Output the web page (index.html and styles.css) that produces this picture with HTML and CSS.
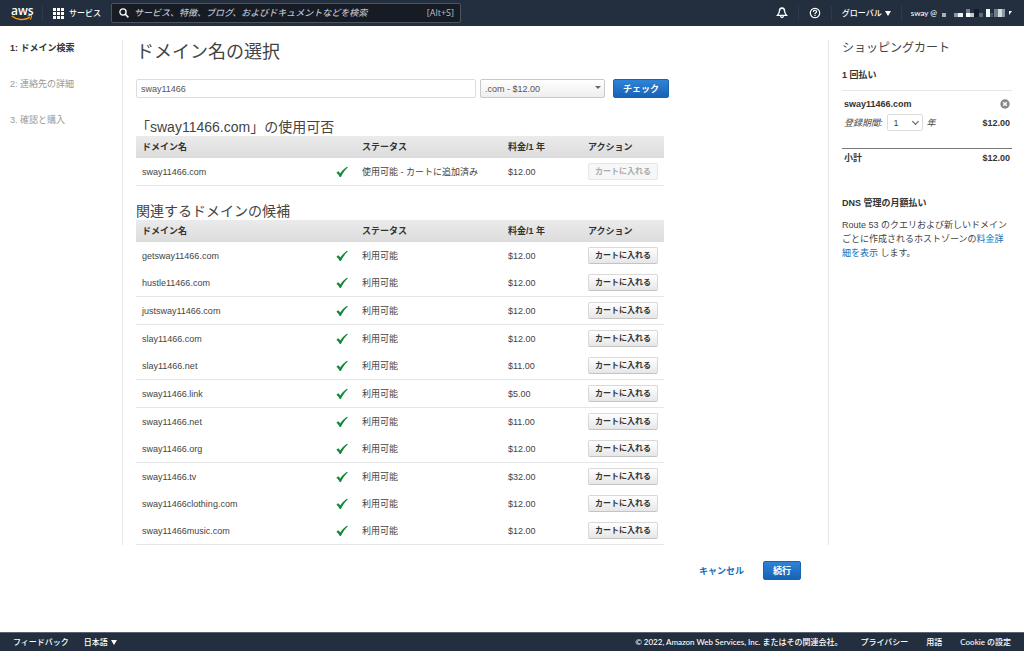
FILE: index.html
```html
<!DOCTYPE html>
<html lang="ja">
<head>
  <meta charset="UTF-8" />
  <meta name="viewport" content="width=device-width, initial-scale=1.0"/>
  <title>ドメイン名の選択</title>
  <link rel="stylesheet" href="styles.css">
</head>
<body>
  <svg class="sprite" aria-hidden="true">
    <symbol id="check" viewBox="0 0 12 12">
      <path d="M0.4 6.8 L2.2 5.2 C3 5.9 3.6 6.6 4.2 7.5 C6 5 8.2 2.6 11 0.8 L11.8 1.6 C8.8 4.2 6.8 7.2 4.9 11 L3.7 11 C2.9 9.4 2 8 0.4 6.8 Z"/>
    </symbol>
  </svg>

  <header class="topbar">
    <a class="logo" href="#">
      <span>aws</span>
      <svg width="22" height="6" viewBox="0 0 22 6" aria-hidden="true">
        <path d="M0.8 1 C6 5.4 13.5 5.6 18.8 2.4" fill="none" stroke="#f90" stroke-width="1.4"/>
        <path d="M16.6 1 C18.2 0.3 19.6 0.3 20.4 0.8 C20.6 2 20.1 3.5 19 4.5" fill="none" stroke="#f90" stroke-width="1.1"/>
      </svg>
    </a>
    <button class="services" type="button">
      <svg width="11" height="11" viewBox="0 0 11 11" aria-hidden="true">
        <path d="M0 0h3v3H0zM4 0h3v3H4zM8 0h3v3H8zM0 4h3v3H0zM4 4h3v3H4zM8 4h3v3H8zM0 8h3v3H0zM4 8h3v3H4zM8 8h3v3H8z" fill="#fff"/>
      </svg>
      サービス
    </button>
    <div class="search">
      <svg width="10" height="10" viewBox="0 0 10 10" aria-hidden="true">
        <circle cx="4" cy="4" r="3.1" fill="none" stroke="#fff" stroke-width="1.3"/>
        <path d="M6.3 6.3L9.4 9.4" stroke="#fff" stroke-width="1.5"/>
      </svg>
      <input type="search" aria-label="検索" placeholder="サービス、特徴、ブログ、およびドキュメントなどを検索">
      <span>[Alt+S]</span>
    </div>
    <div class="tools">
      <button type="button" aria-label="通知">
        <svg width="12" height="12" viewBox="0 0 12 12" fill="none" stroke="#fff" stroke-width="1.3" aria-hidden="true">
          <path d="M6 1 C4 1.2 3.4 2.6 3.4 4.2 C3.4 6 2.6 7 1.4 8.4 H10.6 C9.4 7 8.6 6 8.6 4.2 C8.6 2.6 8 1.2 6 1 Z"/>
          <path d="M4.6 9 C4.8 11 7.2 11 7.4 9"/>
        </svg>
      </button>
      <button type="button" aria-label="ヘルプ">
        <svg width="12" height="12" viewBox="0 0 12 12" fill="none" stroke="#fff" stroke-width="1.2" aria-hidden="true">
          <circle cx="6" cy="6" r="4.7"/>
          <path d="M4.4 4.9 C4.4 2.7 7.6 2.8 7.6 4.7 C7.6 5.9 6 5.7 6 7.1 M6 7.8 V9"/>
        </svg>
      </button>
      <button type="button">グローバル <i class="caret"></i></button>
      <button type="button" class="account">sway @
        <svg width="66" height="8" viewBox="0 0 66 8" aria-hidden="true">
          <path d="M2 4h4v4H2z" fill="#a9b0b8"/>
          <path d="M14 4h4v4h-4z" fill="#8e98a3"/>
          <path d="M18 4h5v4h-5z" fill="#f2f3f4"/>
          <path d="M26 0h4v4h-4z" fill="#71808e"/>
          <path d="M26 4h4v4h-4z" fill="#fff"/>
          <path d="M30 4h4v4h-4z" fill="#c4cacf"/>
          <path d="M34 0h5v8h-5z" fill="#101b2b"/>
          <path d="M39 4h4v4h-4z" fill="#5b6a79"/>
          <path d="M46 0h4v8h-4z" fill="#f4f5f6"/>
          <path d="M50 4h3v4h-3z" fill="#46566a"/>
          <path d="M54 0h4v8h-4z" fill="#707d8a"/>
          <path d="M58 0h4v8h-4z" fill="#d5d9dc"/>
          <path d="M62 0h3v8h-3z" fill="#8d97a1"/>
        </svg>
        <i class="caret small"></i>
      </button>
    </div>
  </header>

  <main class="layout">
    <nav class="steps">
      <ol>
        <li class="current">1: ドメイン検索</li>
        <li>2: 連絡先の詳細</li>
        <li>3. 確認と購入</li>
      </ol>
    </nav>

    <section class="content">
      <h1>ドメイン名の選択</h1>
      <form class="domain-form">
        <input type="text" aria-label="ドメイン名" value="sway11466">
        <span class="tld">
          <select aria-label="トップレベルドメイン">
            <option>.com - $12.00</option>
          </select>
        </span>
        <button class="primary" type="button">チェック</button>
      </form>

      <h2>「sway11466.com」の使用可否</h2>
      <table class="domains">
        <thead>
          <tr><th class="name">ドメイン名</th><th class="mark"></th><th class="status">ステータス</th><th class="price">料金/1 年</th><th>アクション</th></tr>
        </thead>
        <tbody>
          <tr class="line"><td>sway11466.com</td><td><svg class="check"><use href="#check"/></svg></td><td>使用可能 - カートに追加済み</td><td>$12.00</td><td><button type="button" disabled>カートに入れる</button></td></tr>
        </tbody>
      </table>

      <h2 class="related">関連するドメインの候補</h2>
      <table class="domains">
        <thead>
          <tr><th class="name">ドメイン名</th><th class="mark"></th><th class="status">ステータス</th><th class="price">料金/1 年</th><th>アクション</th></tr>
        </thead>
        <tbody>
          <tr><td>getsway11466.com</td><td><svg class="check"><use href="#check"/></svg></td><td>利用可能</td><td>$12.00</td><td><button type="button">カートに入れる</button></td></tr>
          <tr class="line"><td>hustle11466.com</td><td><svg class="check"><use href="#check"/></svg></td><td>利用可能</td><td>$12.00</td><td><button type="button">カートに入れる</button></td></tr>
          <tr class="line"><td>justsway11466.com</td><td><svg class="check"><use href="#check"/></svg></td><td>利用可能</td><td>$12.00</td><td><button type="button">カートに入れる</button></td></tr>
          <tr><td>slay11466.com</td><td><svg class="check"><use href="#check"/></svg></td><td>利用可能</td><td>$12.00</td><td><button type="button">カートに入れる</button></td></tr>
          <tr class="line"><td>slay11466.net</td><td><svg class="check"><use href="#check"/></svg></td><td>利用可能</td><td>$11.00</td><td><button type="button">カートに入れる</button></td></tr>
          <tr class="line"><td>sway11466.link</td><td><svg class="check"><use href="#check"/></svg></td><td>利用可能</td><td>$5.00</td><td><button type="button">カートに入れる</button></td></tr>
          <tr><td>sway11466.net</td><td><svg class="check"><use href="#check"/></svg></td><td>利用可能</td><td>$11.00</td><td><button type="button">カートに入れる</button></td></tr>
          <tr class="line"><td>sway11466.org</td><td><svg class="check"><use href="#check"/></svg></td><td>利用可能</td><td>$12.00</td><td><button type="button">カートに入れる</button></td></tr>
          <tr><td>sway11466.tv</td><td><svg class="check"><use href="#check"/></svg></td><td>利用可能</td><td>$32.00</td><td><button type="button">カートに入れる</button></td></tr>
          <tr><td>sway11466clothing.com</td><td><svg class="check"><use href="#check"/></svg></td><td>利用可能</td><td>$12.00</td><td><button type="button">カートに入れる</button></td></tr>
          <tr class="line"><td>sway11466music.com</td><td><svg class="check"><use href="#check"/></svg></td><td>利用可能</td><td>$12.00</td><td><button type="button">カートに入れる</button></td></tr>
        </tbody>
      </table>
    </section>

    <aside class="cart">
      <h2>ショッピングカート</h2>
      <h3>1 回払い</h3>
      <div class="cart-item">
        <div class="cart-row">
          <strong>sway11466.com</strong>
          <button class="remove" type="button" aria-label="削除">
            <svg width="10" height="10" viewBox="0 0 10 10" aria-hidden="true">
              <circle cx="5" cy="5" r="4.7" fill="#888"/>
              <path d="M3.2 3.2l3.6 3.6M6.8 3.2L3.2 6.8" stroke="#fff" stroke-width="1.4"/>
            </svg>
          </button>
        </div>
        <div class="cart-row">
          <div class="period">
            <label for="years">登録期間:</label>
            <span class="years"><select id="years"><option>1</option></select></span>
            <em>年</em>
          </div>
          <strong>$12.00</strong>
        </div>
      </div>
      <div class="cart-row subtotal">
        <strong>小計</strong>
        <strong>$12.00</strong>
      </div>
      <h3 class="dns">DNS 管理の月額払い</h3>
      <p>Route 53 のクエリおよび新しいドメインごとに作成されるホストゾーンの<a href="#">料金詳細を表示</a> します。</p>
    </aside>

    <div class="actions">
      <a href="#">キャンセル</a>
      <button class="primary" type="button">続行</button>
    </div>
  </main>

  <footer class="bottombar">
    <a href="#">フィードバック</a>
    <button type="button">日本語 <i class="caret"></i></button>
    <span class="copyright">© 2022, Amazon Web Services, Inc. またはその関連会社。</span>
    <a href="#">プライバシー</a>
    <a href="#">用語</a>
    <a href="#">Cookie の設定</a>
  </footer>
</body>
</html>
```
FILE: styles.css
```css
:root {
  --nav-bg: #232f3e;
  --text-color: #444;
  --link-color: #146eb4;
  --line-color: #e6e6e6;
}

* {
  margin: 0;
  padding: 0;
  box-sizing: border-box;
}

body {
  display: flex;
  flex-direction: column;
  min-height: 100vh;
  background: #fff;
  color: var(--text-color);
  font-family: "Liberation Sans", "Noto Sans CJK JP", sans-serif;
  font-size: 9px;
  line-height: 14px;
}

button, input, select {
  font: inherit;
  color: inherit;
}

button {
  cursor: pointer;
}

a {
  color: var(--link-color);
  text-decoration: none;
}

svg {
  display: block;
  flex: none;
}

.sprite {
  position: absolute;
  width: 0;
  height: 0;
}

.caret {
  display: inline-block;
  margin-left: 3px;
  border: 3px solid transparent;
  border-top: 5px solid currentColor;
  border-bottom: 0;
}

.caret.small {
  margin: 0;
  border-width: 4px 3px 0 0;
}

/* Top bar */
.topbar,
.bottombar {
  display: flex;
  align-items: center;
  background: var(--nav-bg);
  color: #fff;
  font-family: Lato, "Noto Sans CJK JP", sans-serif;
  font-size: 8px;
  font-weight: 500;
}

.topbar {
  height: 26px;
}

.topbar button,
.bottombar button {
  display: flex;
  align-items: center;
  border: 0;
  background: none;
}

.logo {
  width: 43px;
  padding-left: 11px;
  border-right: 1px solid #2f3b4a;
  color: #fff;
  font-family: "Open Sans", sans-serif;
  font-size: 12px;
  font-weight: 600;
  line-height: 9px;
}

.logo span {
  display: block;
}

.services {
  gap: 5px;
  padding: 0 10px;
}

.search {
  display: flex;
  align-items: center;
  gap: 5px;
  width: 350px;
  height: 20px;
  padding: 0 6px 0 7px;
  border: 1px solid #4b5560;
  border-radius: 2px;
  background: #161b24;
  color: #b6bec9;
  font-family: "Open Sans", "Noto Sans CJK JP", sans-serif;
  font-size: 9px;
}

.search input {
  flex: 1;
  min-width: 0;
  border: 0;
  outline: 0;
  background: none;
}

.search input::placeholder {
  color: #b6bec9;
  font-style: italic;
  opacity: 1;
}

.tools {
  display: flex;
  margin-left: auto;
  padding-right: 12px;
}

.tools button {
  padding: 0 10px;
  border-left: 1px solid #2f3b4a;
}

.tools button:first-child {
  border-left: 0;
}

.tools .account {
  gap: 3px;
  padding: 0 0 0 9px;
}

/* Page columns */
.layout {
  flex: 1;
  display: grid;
  grid-template-columns: 122px 1fr 196px;
  grid-template-rows: auto 1fr;
  padding-top: 14px;
}

.steps ol {
  padding: 1px 0 0 10px;
  list-style: none;
  color: #999;
}

.steps li {
  height: 36px;
}

.steps .current {
  color: #333;
  font-weight: bold;
}

.content {
  padding-left: 13px;
  border-left: 1px solid var(--line-color);
}

h1 {
  font-size: 18px;
  font-weight: normal;
  line-height: 24px;
}

h2 {
  font-size: 14px;
  font-weight: normal;
  line-height: 18px;
}

.related {
  margin-top: 16px;
}

/* Search form */
.domain-form {
  display: flex;
  margin: 15px 0 20px;
}

.domain-form input,
.domain-form select {
  height: 19px;
  border: 1px solid #ddd;
  border-radius: 2px;
  color: #555;
}

.domain-form input {
  width: 340px;
  padding: 0 4px;
}

.tld,
.years {
  position: relative;
}

.tld {
  width: 125px;
  margin: 0 8px 0 4px;
}

.tld select {
  width: 100%;
  padding: 0 4px;
  appearance: none;
  border-color: #c8c8c8;
  background: linear-gradient(#fff, #eee);
}

.tld::after {
  content: "";
  position: absolute;
  top: 7px;
  right: 4px;
  border: 3px solid transparent;
  border-top-color: #666;
  border-bottom: 0;
  pointer-events: none;
}

.primary {
  height: 19px;
  padding: 0 9px;
  border: 1px solid #1b62ad;
  border-radius: 2px;
  background: linear-gradient(#2f83d6, #1763b6);
  color: #fff;
  font-weight: bold;
}

/* Domain tables */
.domains {
  width: 100%;
  max-width: 528px;
  border-spacing: 0;
  table-layout: fixed;
}

.domains th {
  height: 22px;
  padding-left: 6px;
  background: linear-gradient(#ebebeb, #dcdcdc);
  color: #333;
  text-align: left;
}

.domains td {
  height: 27px;
  padding-left: 6px;
}

.domains .line td {
  height: 28px;
  border-bottom: 1px solid var(--line-color);
}

.domains .name {
  width: 194px;
}

.domains .mark {
  width: 26px;
}

.domains .status {
  width: 146px;
}

.domains .price {
  width: 80px;
}

.domains button {
  display: block;
  height: 17px;
  padding: 0 6px;
  border: 1px solid #d8d8d8;
  border-bottom-color: #c4c4c4;
  border-radius: 2px;
  background: linear-gradient(#fff, #e6e6e6);
  color: #333;
  font-size: 8px;
  font-weight: bold;
  line-height: 12px;
}

.domains button:disabled {
  border-color: #e6e6e6;
  background: #f7f7f7;
  color: #aaa;
  cursor: default;
}

.check {
  width: 12px;
  height: 12px;
  fill: #14883a;
}

/* Shopping cart */
.cart {
  padding: 0 12px 0 13px;
  border-left: 1px solid var(--line-color);
}

.cart h2 {
  font-size: 12px;
  line-height: 16px;
}

.cart h3 {
  margin: 12px 0 8px;
  color: #333;
  font-size: 9px;
}

.cart strong {
  color: #333;
}

.cart-item {
  display: grid;
  gap: 3px;
  padding: 6px 0 17px;
  border-top: 1px solid var(--line-color);
  border-bottom: 1px solid #777;
}

.cart-row {
  display: flex;
  align-items: center;
  justify-content: space-between;
  padding: 0 2px;
}

.remove {
  border: 0;
  background: none;
}

.period {
  display: flex;
  align-items: center;
  gap: 4px;
  font-style: italic;
}

.years select {
  display: block;
  width: 36px;
  height: 17px;
  padding-left: 6px;
  appearance: none;
  border: 1px solid #ddd;
  border-radius: 2px;
  background: #fff;
  font-style: normal;
}

.years::after {
  content: "";
  position: absolute;
  top: 5px;
  right: 5px;
  width: 4px;
  height: 4px;
  border: solid #555;
  border-width: 0 1px 1px 0;
  transform: rotate(45deg);
  pointer-events: none;
}

.subtotal {
  padding-top: 2px;
}

.cart .dns {
  margin-top: 31px;
}

.cart p {
  line-height: 14px;
}

/* Wizard buttons */
.actions {
  grid-column: 2;
  display: flex;
  align-items: center;
  align-self: start;
  justify-content: flex-end;
  gap: 19px;
  padding: 16px 27px 16px 0;
  font-weight: bold;
}

/* Footer */
.bottombar {
  height: 19px;
  padding: 0 13px;
  border-top: 1px solid #5a6472;
}

.bottombar a {
  color: #fff;
}

.bottombar button {
  margin-left: 15px;
}

.bottombar .copyright {
  margin-left: auto;
}

.bottombar .copyright ~ a {
  margin-left: 18px;
}
```
